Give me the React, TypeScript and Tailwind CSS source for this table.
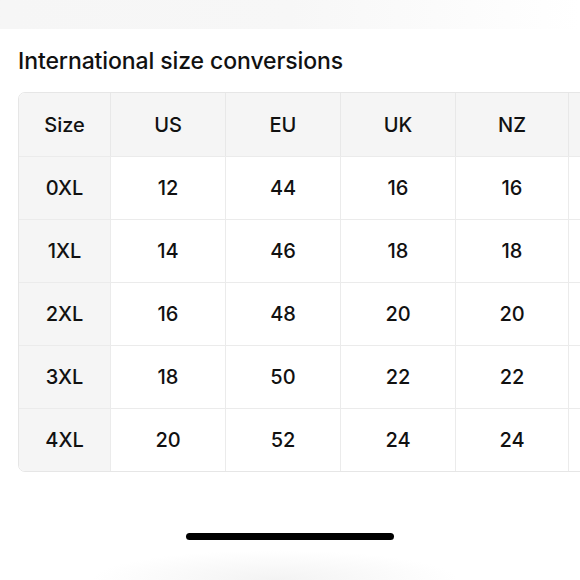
const headers = ['Size', 'US', 'EU', 'UK', 'NZ', ''];

const rows = [
  ['0XL', '12', '44', '16', '16', ''],
  ['1XL', '14', '46', '18', '18', ''],
  ['2XL', '16', '48', '20', '20', ''],
  ['3XL', '18', '50', '22', '22', ''],
  ['4XL', '20', '52', '24', '24', ''],
];

export default function App() {
  return (
    <div
      className="relative w-[580px] h-[580px] overflow-hidden bg-white text-[#111]"
      style={{ fontFamily: 'Inter, "Noto Sans", sans-serif' }}
    >
      <div className="h-[29px] bg-gradient-to-r from-[#f6f6f6] via-[#f7f7f7] to-white" />

      <h1 className="mt-[18px] ml-[18px] text-[23px] leading-[28px] font-medium tracking-[-0.1px]">
        International size conversions
      </h1>

      <div className="mt-[17px] ml-[18px] w-[700px] rounded-l-[7px] border border-[#e6e6e6] overflow-hidden">
        <div className="grid grid-cols-[91px_115px_115px_115px_113px_115px] h-[63px] bg-[#f5f5f5]">
          {headers.map((h, i) => (
            <div
              key={i}
              className={`flex items-center justify-center text-[20px] font-medium ${i > 0 ? 'border-l border-[#e8e8e8]' : ''}`}
            >
              {h}
            </div>
          ))}
        </div>
        {rows.map((r) => (
          <div
            key={r[0]}
            className="grid grid-cols-[91px_115px_115px_115px_113px_115px] h-[63px] border-t border-[#ebebeb]"
          >
            {r.map((c, i) => (
              <div
                key={i}
                className={`flex items-center justify-center text-[20px] font-medium ${i === 0 ? 'bg-[#f5f5f5]' : 'border-l border-[#ebebeb]'}`}
              >
                {c}
              </div>
            ))}
          </div>
        ))}
      </div>

      <div className="absolute left-[186px] top-[533px] w-[208px] h-[7px] rounded-full bg-black" />
      <div className="absolute left-[90px] top-[550px] w-[370px] h-[60px] bg-[radial-gradient(ellipse_at_center,#f3f3f3,white_70%)]" />
    </div>
  );
}
